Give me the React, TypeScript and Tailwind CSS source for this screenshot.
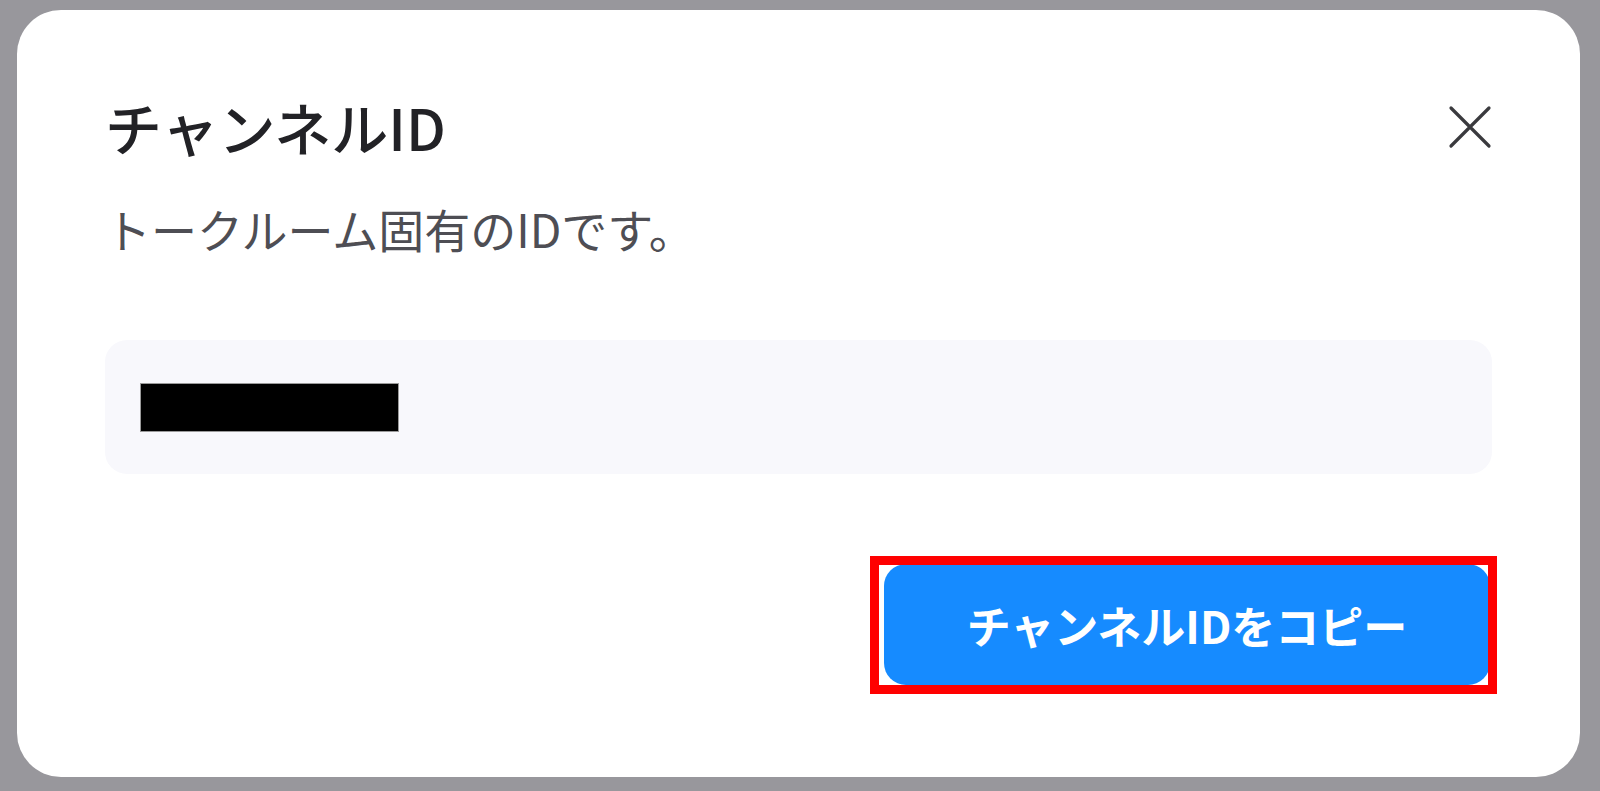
import React from "react";

const CloseIcon = () => (
  <svg width="44" height="44" viewBox="0 0 44 44" fill="none" stroke="#3a3a3e" strokeWidth="3.2" strokeLinecap="round">
    <path d="M3 3 L41 41 M41 3 L3 41" />
  </svg>
);

export default function App() {
  return (
    <div
      className="w-full h-[791px] bg-[#98979c] overflow-hidden pt-[10px] pl-[17px] pr-[20px]"
      style={{ fontFamily: '"Noto Sans CJK JP", "Noto Sans", sans-serif' }}
    >
      <div className="w-[1563px] h-[767px] bg-white rounded-[44px] flex flex-col px-[88px] pt-[88px]">
        <div className="flex items-center justify-between">
          <h1 className="text-[57px] leading-[57px] font-medium text-[#222226]">チャンネルID</h1>
          <button className="w-[44px] h-[44px] flex items-center justify-center">
            <CloseIcon />
          </button>
        </div>

        <p className="mt-[50px] text-[46px] leading-[46px] font-normal text-[#4e4e54]">トークルーム固有のIDです。</p>

        <div className="mt-[89px] h-[134px] rounded-[22px] bg-[#f8f8fc] flex items-center px-[35px]">
          <div className="w-[259px] h-[49px] bg-black border border-[#9a9a9a]" />
        </div>

        <div className="mt-[90px] flex justify-end pr-[2px]">
          <div className="relative">
            <button className="w-[606px] h-[121px] rounded-[22px] bg-[#168bff] text-white text-[44px] font-bold flex items-center justify-center">
              チャンネルIDをコピー
            </button>
            <div className="absolute left-[-14px] right-[-7px] top-[-8px] bottom-[-9px] border-[9px] border-[#ff0000] pointer-events-none" />
          </div>
        </div>
      </div>
    </div>
  );
}
